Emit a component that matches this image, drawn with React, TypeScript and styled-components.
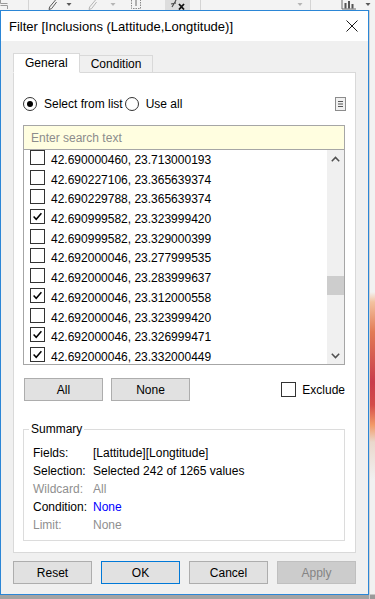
import React from 'react';
import styled, { createGlobalStyle } from 'styled-components';

const GlobalStyle = createGlobalStyle`
  html, body {
    margin: 0;
    padding: 0;
  }
  body {
    font-family: "Liberation Sans", Arial, sans-serif;
    font-size: 12px;
    color: #000;
  }
  * {
    box-sizing: border-box;
  }
`;

const Stage = styled.div`
  width: 375px;
  height: 599px;
  overflow: hidden;
  display: flex;
  flex-direction: column;
  background: #f3f3f3;
`;

/* the application toolbar peeking above the dialog */
const ToolStrip = styled.div`
  height: 10px;
  flex: none;
  display: flex;
  background: #f3f3f3;
  overflow: hidden;
`;

const ToolSlot = styled.div<{ $w: number; $lit?: boolean }>`
  width: ${(p) => p.$w}px;
  height: 10px;
  flex: none;
  display: flex;
  align-items: flex-end;
  justify-content: center;
  background: ${(p) => (p.$lit ? '#dddddd' : 'transparent')};
`;

const ToolDivider = styled.div`
  width: 1px;
  height: 10px;
  flex: none;
  background: #d4d4d4;
`;

const Desk = styled.div`
  flex: 1;
  display: flex;
`;

const DialogColumn = styled.div`
  width: 369px;
  flex: none;
  background: #a3a3a3;
`;

const SideStrip = styled.div`
  flex: 1;
  border-left: 1px solid #d0d0d0;
  background: linear-gradient(
    to bottom,
    #f2f2f2 0px,
    #f2f2f2 282px,
    #f3c2a0 292px,
    #e27a55 322px,
    #c93c4c 372px,
    #d44c4a 395px,
    #f29a68 415px,
    #ead8cc 432px,
    #f1f1f1 470px,
    #f1f1f1 584px,
    #9a9a9a 585px
  );
`;

const Dialog = styled.div`
  width: 369px;
  height: 585px;
  border: 1px solid #2b86d6;
  background: #f0f0f0;
  display: flex;
  flex-direction: column;
`;

const TitleBar = styled.div`
  height: 30px;
  flex: none;
  background: #fff;
  display: flex;
  align-items: center;
  padding-left: 8px;
`;

const Title = styled.div`
  flex: 1;
  font-size: 13px;
  white-space: nowrap;
`;

const CloseButton = styled.button`
  width: 12px;
  height: 12px;
  margin-right: 10px;
  padding: 0;
  border: 0;
  background: none;
  display: flex;
`;

const Body = styled.div`
  flex: 1;
  display: flex;
  flex-direction: column;
  padding: 12px 12px 10px;
`;

const TabStrip = styled.div`
  height: 20px;
  display: flex;
  align-items: flex-end;
  margin-bottom: -1px;
  position: relative;
  z-index: 1;
`;

const Tab = styled.div<{ $active?: boolean }>`
  height: ${(p) => (p.$active ? 20 : 18)}px;
  padding: 0 11px;
  display: flex;
  align-items: center;
  border: 1px solid #d9d9d9;
  border-bottom-color: ${(p) => (p.$active ? '#fff' : '#d9d9d9')};
  background: ${(p) => (p.$active ? '#fff' : '#f0f0f0')};
  margin-left: ${(p) => (p.$active ? 0 : -1)}px;
  position: relative;
  z-index: ${(p) => (p.$active ? 2 : 1)};
  white-space: nowrap;
`;

const Panel = styled.div`
  height: 481px;
  flex: none;
  background: #fff;
  border: 1px solid #d9d9d9;
  padding: 0 10px 0 9px;
  display: flex;
  flex-direction: column;
`;

const ChoiceRow = styled.div`
  margin-top: 21px;
  height: 20px;
  display: flex;
  align-items: center;
`;

const RadioOption = styled.label`
  display: flex;
  align-items: center;
  gap: 7px;
  margin-right: 2px;
  white-space: nowrap;
`;

const RadioDot = styled.span<{ $checked?: boolean }>`
  width: 14px;
  height: 14px;
  border-radius: 50%;
  border: 1px solid #333;
  background: #fff;
  display: flex;
  align-items: center;
  justify-content: center;

  &::after {
    content: '';
    width: 6px;
    height: 6px;
    border-radius: 50%;
    background: #000;
    display: ${(p) => (p.$checked ? 'block' : 'none')};
  }
`;

const MenuIcon = styled.svg`
  margin-left: auto;
  margin-right: -1px;
  flex: none;
`;

const SearchInput = styled.input`
  margin-top: 11px;
  height: 25px;
  width: 100%;
  border: 1px solid #a6a6a6;
  background: #fffee0;
  padding: 0 7px;
  font: 12px "Liberation Sans", Arial, sans-serif;
  outline: none;

  &::placeholder {
    color: #8c8c8c;
  }
`;

const ValueList = styled.div`
  margin-top: -1px;
  height: 216px;
  flex: none;
  border: 1px solid #a6a6a6;
  background: #fff;
  display: flex;
  overflow: hidden;
`;

const Rows = styled.div`
  flex: 1;
  overflow: hidden;
`;

const Row = styled.div`
  height: 19.7px;
  display: flex;
  align-items: flex-start;
  gap: 6px;
  padding-left: 6px;
`;

const CheckBox = styled.span<{ $checked?: boolean }>`
  width: 15px;
  height: 15px;
  flex: none;
  border: 1px solid #333;
  background: #fff;
  display: flex;
  align-items: center;
  justify-content: center;
`;

const RowText = styled.span`
  margin-top: 2px;
  line-height: 17px;
  white-space: nowrap;
`;

const ScrollTrack = styled.div`
  width: 17px;
  flex: none;
  background: #f0f0f0;
  display: flex;
  flex-direction: column;
`;

const ScrollArrow = styled.div`
  height: 17px;
  flex: none;
  display: flex;
  align-items: center;
  justify-content: center;
`;

const ThumbLane = styled.div`
  flex: 1;
`;

const Thumb = styled.div`
  height: 19px;
  background: #cdcdcd;
`;

const ActionRow = styled.div`
  margin-top: 13px;
  display: flex;
  align-items: center;
  gap: 8px;
  padding-left: 1px;
`;

const PushButton = styled.button<{ $variant?: 'plain' | 'primary' | 'disabled' }>`
  width: 79px;
  height: 23px;
  flex: none;
  padding: 0;
  font: 12px "Liberation Sans", Arial, sans-serif;
  color: ${(p) => (p.$variant === 'disabled' ? '#848484' : '#000')};
  background: ${(p) => (p.$variant === 'disabled' ? '#cccccc' : '#e1e1e1')};
  border: 1px solid
    ${(p) =>
      p.$variant === 'primary' ? '#0078d7' : p.$variant === 'disabled' ? '#bfbfbf' : '#adadad'};
`;

const ExcludeOption = styled.label`
  margin-left: auto;
  display: flex;
  align-items: center;
  gap: 6px;
`;

const SummaryBox = styled.fieldset`
  margin: 21px 0 0;
  padding: 8px 9px 6px;
  border: 1px solid #dcdcdc;
  min-width: 0;
`;

const SummaryLegend = styled.legend`
  padding: 0 2px;
  margin-left: -4px;
  line-height: 14px;
`;

const SummaryGrid = styled.div`
  display: grid;
  grid-template-columns: 60px 1fr;
  grid-auto-rows: 18px;
  align-items: center;
  white-space: nowrap;
`;

const Term = styled.span<{ $muted?: boolean }>`
  color: ${(p) => (p.$muted ? '#8f8f8f' : '#000')};
`;

const Detail = styled.span<{ $tone?: 'plain' | 'muted' | 'link' }>`
  color: ${(p) => (p.$tone === 'muted' ? '#8f8f8f' : p.$tone === 'link' ? '#0000ff' : '#000')};
`;

const Footer = styled.div`
  margin-top: 8px;
  display: flex;
  justify-content: space-between;
`;

const rows: Array<[string, boolean]> = [
  ['42.690000460, 23.713000193', false],
  ['42.690227106, 23.365639374', false],
  ['42.690229788, 23.365639374', false],
  ['42.690999582, 23.323999420', true],
  ['42.690999582, 23.329000399', false],
  ['42.692000046, 23.277999535', false],
  ['42.692000046, 23.283999637', false],
  ['42.692000046, 23.312000558', true],
  ['42.692000046, 23.323999420', false],
  ['42.692000046, 23.326999471', true],
  ['42.692000046, 23.332000449', true],
];

const totalRows = 1265;
const firstRow = 849;
const laneHeight = 180;
const thumbHeight = 19;

const summary: Array<{ term: string; detail: string; tone?: 'plain' | 'muted' | 'link' }> = [
  { term: 'Fields:', detail: '[Lattitude][Longtitude]' },
  { term: 'Selection:', detail: 'Selected 242 of 1265 values' },
  { term: 'Wildcard:', detail: 'All', tone: 'muted' },
  { term: 'Condition:', detail: 'None', tone: 'link' },
  { term: 'Limit:', detail: 'None', tone: 'muted' },
];

type ToolKind = 'blank' | 'sep' | 'pen' | 'caret' | 'box' | 'fx' | 'chart' | 'stack';
const tools: Array<{ kind: ToolKind; w?: number; faint?: boolean; lit?: boolean }> = [
  { kind: 'stack', w: 8 },
  { kind: 'blank', w: 20 },
  { kind: 'sep' },
  { kind: 'blank', w: 17 },
  { kind: 'pen', w: 12 },
  { kind: 'blank', w: 6 },
  { kind: 'caret', w: 10 },
  { kind: 'blank', w: 12 },
  { kind: 'pen', w: 12, faint: true },
  { kind: 'blank', w: 10 },
  { kind: 'caret', w: 10, faint: true },
  { kind: 'blank', w: 12 },
  { kind: 'box', w: 12 },
  { kind: 'blank', w: 23 },
  { kind: 'fx', w: 25, lit: true },
  { kind: 'blank', w: 10 },
  { kind: 'sep' },
  { kind: 'blank', w: 94 },
  { kind: 'caret', w: 10, faint: true },
  { kind: 'blank', w: 5 },
  { kind: 'sep' },
  { kind: 'blank', w: 29 },
  { kind: 'chart', w: 18 },
  { kind: 'blank', w: 5 },
  { kind: 'caret', w: 10 },
];

function ToolGlyph({ kind, faint }: { kind: ToolKind; faint?: boolean }) {
  const ink = faint ? '#b5b5b5' : '#5a5a5a';
  switch (kind) {
    case 'pen':
      return (
        <svg width="10" height="10" viewBox="0 0 10 10">
          <path d="M2 9.5 L2.6 7 L8.5 0 M2 9.5 L4.6 8.6 L9.6 2" stroke={ink} fill="none" strokeWidth="1" />
        </svg>
      );
    case 'caret':
      return (
        <svg width="6" height="10" viewBox="0 0 6 10">
          <path d="M0.5 3 L5.5 3 L3 6 Z" fill={ink} />
        </svg>
      );
    case 'box':
      return (
        <svg width="10" height="10" viewBox="0 0 10 10">
          <path d="M0.5 0 V8.5 H9.5 V0" stroke="#8a8a8a" strokeDasharray="1.5 1" fill="none" />
          <path d="M5 0 V6" stroke="#6a6a6a" />
        </svg>
      );
    case 'fx':
      return (
        <svg width="16" height="10" viewBox="0 0 16 10">
          <path d="M2 7 L5 2 L6 0 M1 4 L6 3" stroke="#4a4a4a" fill="none" strokeWidth="1.2" />
          <path d="M9 4 L14 9.5 M14 4 L9 9.5" stroke="#111" strokeWidth="1.8" />
        </svg>
      );
    case 'chart':
      return (
        <svg width="16" height="10" viewBox="0 0 16 10">
          <path d="M1 0 V9 H15" stroke="#6a6a6a" fill="none" />
          <rect x="3.5" y="3" width="2" height="5.5" fill="#555" />
          <rect x="7" y="1" width="2" height="7.5" fill="#555" />
          <rect x="10.5" y="4" width="2" height="4.5" fill="#555" />
        </svg>
      );
    case 'stack':
      return (
        <svg width="8" height="10" viewBox="0 0 8 10">
          <path d="M0.5 0 V3.5 H7.5 M0.5 5.5 H7.5 V9" stroke="#9a9a9a" fill="none" />
        </svg>
      );
    default:
      return null;
  }
}

function Chevron({ up }: { up?: boolean }) {
  return (
    <svg width="9" height="6" viewBox="0 0 9 6">
      <path d={up ? 'M0.8 5.2 L4.5 1.4 L8.2 5.2' : 'M0.8 0.8 L4.5 4.6 L8.2 0.8'} stroke="#505050" strokeWidth="1.5" fill="none" />
    </svg>
  );
}

function Tick() {
  return (
    <svg width="13" height="13" viewBox="0 0 13 13">
      <path d="M2.6 6.6 L5.2 9.3 L10.4 3.2" stroke="#000" strokeWidth="1.5" fill="none" />
    </svg>
  );
}

export default function App() {
  const thumbTop = Math.round(((laneHeight - thumbHeight) * firstRow) / (totalRows - rows.length));

  return (
    <Stage>
      <GlobalStyle />
      <ToolStrip>
        {tools.map((t, i) =>
          t.kind === 'sep' ? (
            <ToolDivider key={i} />
          ) : (
            <ToolSlot key={i} $w={t.w ?? 10} $lit={t.lit}>
              <ToolGlyph kind={t.kind} faint={t.faint} />
            </ToolSlot>
          )
        )}
      </ToolStrip>

      <Desk>
        <DialogColumn>
          <Dialog>
            <TitleBar>
              <Title>Filter [Inclusions (Lattitude,Longtitude)]</Title>
              <CloseButton aria-label="Close">
                <svg width="12" height="12" viewBox="0 0 12 12">
                  <path d="M0.5 0.5 L11.5 11.5 M11.5 0.5 L0.5 11.5" stroke="#1a1a1a" strokeWidth="1" />
                </svg>
              </CloseButton>
            </TitleBar>

            <Body>
              <TabStrip>
                <Tab $active>General</Tab>
                <Tab>Condition</Tab>
              </TabStrip>

              <Panel>
                <ChoiceRow>
                  <RadioOption>
                    <RadioDot $checked />
                    Select from list
                  </RadioOption>
                  <RadioOption>
                    <RadioDot />
                    Use all
                  </RadioOption>
                  <MenuIcon width="11" height="14" viewBox="0 0 11 14">
                    <rect x="0.5" y="0.5" width="10" height="13" fill="#f0f0f0" stroke="#8c8c8c" />
                    <path d="M3 4.5 H8 M3 7 H8 M3 9.5 H8" stroke="#555" strokeWidth="1" />
                  </MenuIcon>
                </ChoiceRow>

                <SearchInput placeholder="Enter search text" />

                <ValueList>
                  <Rows>
                    {rows.map(([label, checked]) => (
                      <Row key={label + String(checked)}>
                        <CheckBox $checked={checked}>{checked && <Tick />}</CheckBox>
                        <RowText>{label}</RowText>
                      </Row>
                    ))}
                  </Rows>
                  <ScrollTrack>
                    <ScrollArrow>
                      <Chevron up />
                    </ScrollArrow>
                    <ThumbLane>
                      <Thumb style={{ marginTop: thumbTop }} />
                    </ThumbLane>
                    <ScrollArrow>
                      <Chevron />
                    </ScrollArrow>
                  </ScrollTrack>
                </ValueList>

                <ActionRow>
                  <PushButton>All</PushButton>
                  <PushButton>None</PushButton>
                  <ExcludeOption>
                    <CheckBox />
                    Exclude
                  </ExcludeOption>
                </ActionRow>

                <SummaryBox>
                  <SummaryLegend>Summary</SummaryLegend>
                  <SummaryGrid>
                    {summary.map((s) => (
                      <React.Fragment key={s.term}>
                        <Term $muted={s.tone === 'muted'}>{s.term}</Term>
                        <Detail $tone={s.tone}>{s.detail}</Detail>
                      </React.Fragment>
                    ))}
                  </SummaryGrid>
                </SummaryBox>
              </Panel>

              <Footer>
                <PushButton>Reset</PushButton>
                <PushButton $variant="primary">OK</PushButton>
                <PushButton>Cancel</PushButton>
                <PushButton $variant="disabled">Apply</PushButton>
              </Footer>
            </Body>
          </Dialog>
        </DialogColumn>
        <SideStrip />
      </Desk>
    </Stage>
  );
}
